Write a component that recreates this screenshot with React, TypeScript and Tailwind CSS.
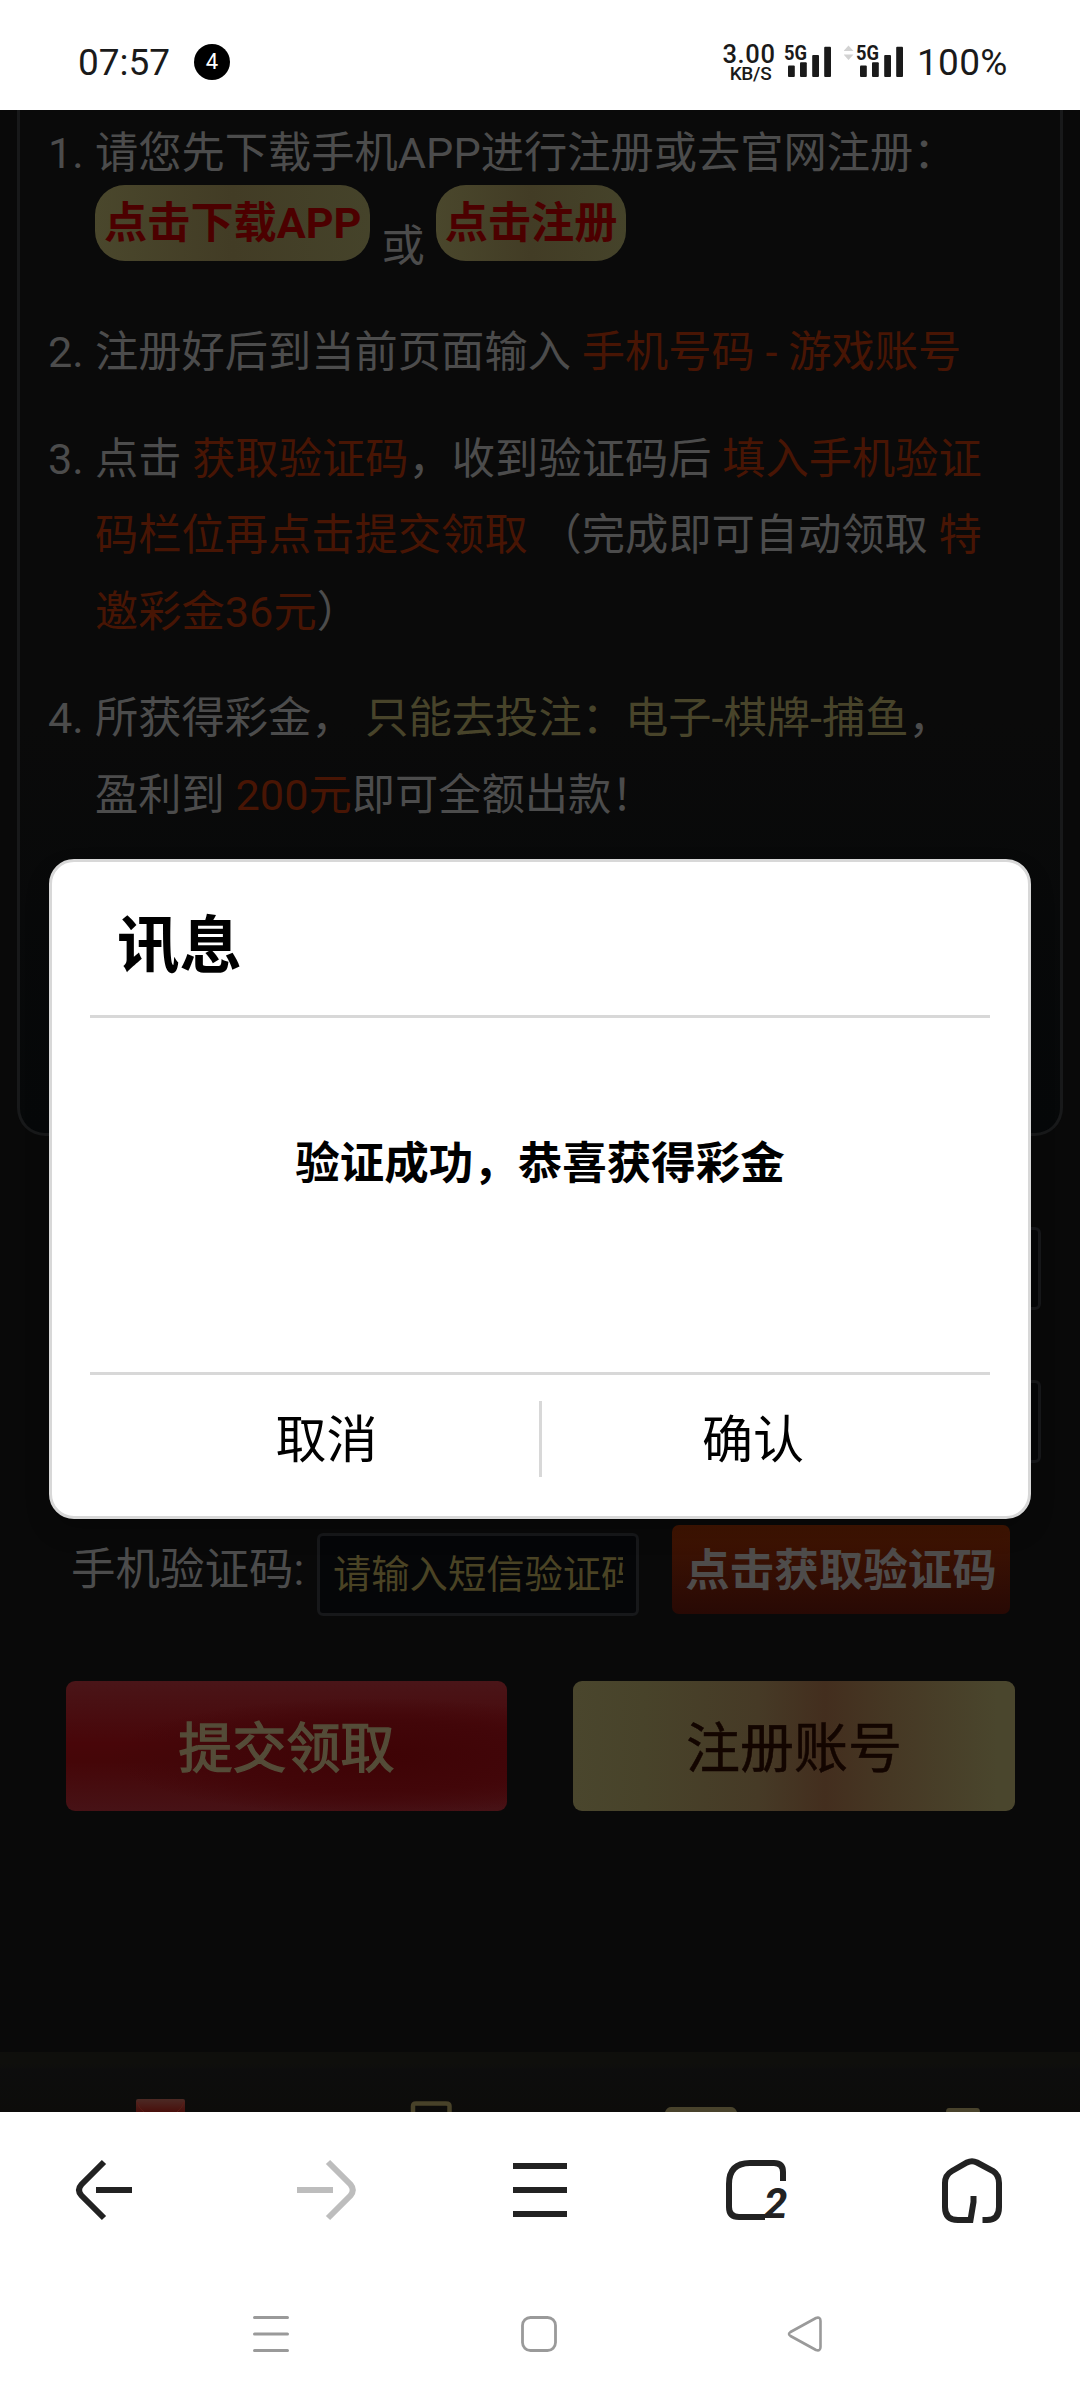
import type { ReactNode } from 'react';

function Signal({ arrows }: { arrows?: boolean }) {
  return (
    <svg width="60" height="40" viewBox="0 0 60 40" className="block">
      {arrows && <path d="M-0.500 11 L4.500 5.500 L9.500 11 Z M-0.500 14.500 L9.500 14.500 L4.500 20 Z" fill="#d2d2d2" />}
      <text x="12" y="20.200" fontSize="21" fontWeight="700" fontFamily="Roboto" textLength="23" lengthAdjust="spacingAndGlyphs" fill="#1a1a1a">
        5G
      </text>
      <g fill="#1a1a1a">
        <rect x="16" y="25.500" width="6.800" height="11.500" rx="1" />
        <rect x="28" y="22.300" width="6.800" height="14.700" rx="1" />
        <rect x="40.200" y="15" width="6.800" height="22" rx="1" />
        <rect x="52.200" y="6.800" width="6.800" height="30.200" rx="1" />
      </g>
    </svg>
  );
}

function StatusBar() {
  return (
    <header className="flex h-[110px] shrink-0 items-center bg-white pt-[15px] pl-[78px] text-[#1a1a1a]">
      <span className="w-[92px] pt-px text-[37px] leading-[44px]">07:57</span>
      <span className="ml-[24px] flex size-[36px] -translate-y-[1px] items-center justify-center rounded-full bg-black text-[22px] text-white">4</span>
      <div className="ml-[492px] flex w-[54px] shrink-0 flex-col items-center">
        <span className="text-[25.500px] leading-[23px] font-medium tracking-[0.6px]">3.00</span>
        <span className="pl-[3px] text-[19px] leading-[16px] font-medium tracking-[-0.3px]">KB/S</span>
      </div>
      <div className="-ml-[4px] flex shrink-0 gap-[12px] pb-[15px]">
        <div className="h-[40px] pt-[5px]"><Signal /></div>
        <div className="h-[40px] pt-[5px]"><Signal arrows /></div>
      </div>
      <span className="ml-[13px] pt-px text-[37px] leading-[44px] tracking-[0.3px]">100%</span>
    </header>
  );
}

function Hot({ children }: { children: ReactNode }) {
  return <span className="text-[#481504]">{children}</span>;
}

function Item({ n, children }: { n: number; children: ReactNode }) {
  return (
    <li className="mb-[30px] flex">
      <span className="w-[47px] shrink-0">{n}.</span>
      <div className="whitespace-nowrap">{children}</div>
    </li>
  );
}

function Pill({ children }: { children: ReactNode }) {
  return (
    <button className="h-[76px] rounded-[30px] bg-linear-to-r from-[#4a472c] via-[#423c25] to-[#45432a] px-[9px] text-[43.200px] leading-[76px] font-bold text-[#4c0000]">
      <span className="block translate-y-[1px]">{children}</span>
    </button>
  );
}

function Rules() {
  return (
    <section className="mx-[17px] -mt-[3px] h-[1029px] rounded-b-[28px] border-[3px] border-t-0 border-[#18191a] bg-linear-to-b from-[#0a0a0a] from-60% to-[#060809]">
      <ol className="pt-[9px] pl-[28px] text-[43.280px] leading-[76.500px] text-[#4c4c4c]">
        <Item n={1}>
          <div className="h-[69px]">请您先下载手机APP进行注册或去官网注册：</div>
          <div className="flex h-[100px] items-start">
            <Pill>点击下载APP</Pill>
            <span className="mt-[24px] px-[11px]">或</span>
            <Pill>点击注册</Pill>
          </div>
        </Item>
        <Item n={2}>
          注册好后到当前页面输入 <Hot>手机号码 - 游戏账号</Hot>
        </Item>
        <Item n={3}>
          点击 <Hot>获取验证码</Hot>，收到验证码后 <Hot>填入手机验证<br />码栏位再点击提交领取</Hot> （完成即可自动领取 <Hot>特<br />邀彩金36元</Hot>）
        </Item>
        <Item n={4}>
          所获得彩金， <span className="text-[#48442a]">只能去投注：电子-棋牌-捕鱼</span>，<br />
          盈利到 <Hot>200元</Hot>即可全额出款！
        </Item>
      </ol>
    </section>
  );
}

function FormArea() {
  return (
    <div>
      <div className="mt-[91px] mr-[39px] ml-[317px] h-[83px] rounded-[6px] border-[3px] border-[#17181b] bg-[#050608]" />
      <div className="mt-[70px] mr-[39px] ml-[317px] h-[83px] rounded-[6px] border-[3px] border-[#17181b] bg-[#050608]" />
      <div className="mt-[62px] flex h-[89px] items-start pl-[71px]">
        <label className="w-[246px] pt-[2px] text-[44.500px] leading-[87px] whitespace-nowrap text-[#4c4c4c]">手机验证码:</label>
        <div className="mt-[8px] flex h-[83px] w-[322px] items-center rounded-[6px] border-[3px] border-[#17181a] bg-[#050608] px-[13px]">
          <span className="block w-full overflow-hidden text-[38.300px] leading-[77px] whitespace-nowrap text-[#4a4324]">请输入短信验证码</span>
        </div>
        <button className="ml-[33px] h-[89px] w-[338px] rounded-[7px] bg-linear-to-b from-[#421502] to-[#280904] pt-[3px] text-[44.500px] leading-[87px] font-bold whitespace-nowrap text-[#4e4c4b]">
          点击获取验证码
        </button>
      </div>
      <div className="mt-[67px] flex gap-[66px] pl-[66px]">
        <button className="h-[130px] w-[441px] rounded-[9px] bg-[radial-gradient(ellipse_60%_45%_at_70%_58%,#3e0305_0%,#420609_60%,transparent_100%),linear-gradient(180deg,#4a1518_0%,#480609_48%,#450608_62%,#471216_100%)] pt-[6px] text-[54px] text-[#544c38] [-webkit-text-stroke:1.4px_#544c38]">
          提交领取
        </button>
        <button className="h-[130px] w-[442px] rounded-[9px] bg-[linear-gradient(90deg,#4a462d_0%,#48432a_16%,#463a26_42%,#432e1e_57%,#463824_72%,#4a462d_96%)] pt-[6px] text-[54px] text-[#130500] [-webkit-text-stroke:0.5px_#130500]">
          注册账号
        </button>
      </div>
    </div>
  );
}

function SiteFooter() {
  return (
    <div className="mt-[241px] h-[60px] bg-linear-to-b from-[#0f0f0c] from-20% via-[#0d0d0d] via-30% to-[#0d0c0a]">
      <svg width="1080" height="60" viewBox="0 0 1080 60" className="block">
        <defs>
          <linearGradient id="envelope" x1="0" y1="0" x2="0" y2="1">
            <stop offset="0" stopColor="#4c2a25" />
            <stop offset="1" stopColor="#490f0b" />
          </linearGradient>
        </defs>
        <path d="M136 60 V49 Q136 47 138 47 H183 Q185 47 185 49 V60 Z" fill="url(#envelope)" />
        <path d="M137 50 Q139 57 144 60 M184 50 Q182 57 177 60" fill="none" stroke="#5a1d17" strokeWidth="1" />
        <path d="M413 60 V54 Q413 51.500 416 51.500 H446 Q449.500 51.500 449.500 54 V60" fill="none" stroke="#484229" strokeWidth="4.500" />
        <path d="M665 60 Q667 55 671 55 H731 Q735 55 737 60 Z" fill="#49432c" />
        <path d="M946 60 Q946 56 949 56 H977 Q980 56 980 60 Z" fill="#49432c" />
      </svg>
    </div>
  );
}

function Dialog() {
  return (
    <div className="absolute top-[749px] left-[49px] flex h-[660px] w-[982px] flex-col rounded-[25px] border-[3px] border-[#d8d8d8] bg-white px-[38px] text-black shadow-[0_12px_24px_rgba(0,0,0,0.2)]">
      <h1 className="h-[153px] pl-[27px] text-[62.500px] leading-[169px] font-bold">讯息</h1>
      <div className="h-[3px] shrink-0 bg-[#d8d8d8]" />
      <p className="h-[354px] pt-[117px] text-center text-[44.500px] leading-[58px] font-bold">验证成功，恭喜获得彩金</p>
      <div className="h-[3px] shrink-0 bg-[#d8d8d8]" />
      <div className="flex pt-[26px] text-[51px] leading-[76px]">
        <button className="w-[449px] translate-y-[2px] pl-[24px]">取消</button>
        <span className="h-[76px] w-[3px] bg-[#d8d8d8]" />
        <button className="w-[448px] translate-y-[2px] pr-[26px]">确认</button>
      </div>
    </div>
  );
}

function BrowserNav() {
  return (
    <nav className="flex h-[156px] items-center bg-white pl-[72px] text-[#222]">
      <svg width="64" height="70" viewBox="0 0 64 70" fill="none" stroke="currentColor" strokeWidth="6">
        <path d="M32 7 L9.500 29.500 Q4.500 35 9.500 40.500 L32 63 M24 35 H60" />
      </svg>
      <svg width="64" height="70" viewBox="0 0 64 70" fill="none" stroke="#bdbdbd" strokeWidth="6" className="ml-[159px]">
        <path d="M33 7 L55.500 29.500 Q60 35 55.500 40.500 L33 63 M2 35 H38" />
      </svg>
      <svg width="54" height="70" viewBox="0 0 54 70" fill="none" stroke="currentColor" strokeWidth="6" className="ml-[154px]">
        <path d="M0 11 H54 M0 35 H54 M0 59 H54" />
      </svg>
      <svg width="70" height="70" viewBox="0 0 70 70" fill="none" stroke="currentColor" strokeWidth="6" className="ml-[155px]">
        <path d="M61 26 V17 Q61 8 52 8 H28 Q7 8 7 29 V52 Q7 62 17 62 H43" />
        <text x="42" y="62.500" fontSize="42" fontWeight="700" fontStyle="italic" fontFamily="Roboto" fill="currentColor" stroke="none">
          2
        </text>
      </svg>
      <svg width="70" height="70" viewBox="0 0 70 70" fill="none" stroke="currentColor" strokeWidth="6" className="ml-[146px]">
        <path d="M44.500 65 H49 Q61 65 61 52 V28 Q61 20 55 16 L39 7.500 Q34 5 29 7.500 L14 16 Q7 20 7 28 V52 Q7 65 20 65 H32.500 L35.500 47 V41" />
      </svg>
    </nav>
  );
}

function SystemNav() {
  return (
    <div className="flex flex-1 items-start bg-white pt-[46px] pl-[253px] text-[#9a9a9a]">
      <svg width="36" height="40" viewBox="0 0 36 40" stroke="currentColor" strokeWidth="3" strokeLinecap="round">
        <path d="M1.500 3.500 H34.500 M1.500 20 H34.500 M1.500 36.500 H34.500" />
      </svg>
      <svg width="38" height="40" viewBox="0 0 38 40" fill="none" stroke="currentColor" strokeWidth="2.800" className="ml-[231px]">
        <rect x="2.500" y="3.500" width="33" height="33" rx="8" />
      </svg>
      <svg width="38" height="40" viewBox="0 0 38 40" fill="none" stroke="currentColor" strokeWidth="2.600" strokeLinejoin="round" className="ml-[228px]">
        <path d="M4.500 18 Q1.500 20 4.500 22 L30 36 Q34.500 37.500 34.500 33 V7 Q34.500 2.500 30 4 Z" />
      </svg>
    </div>
  );
}

export default function App() {
  return (
    <div className="flex h-[2400px] w-[1080px] flex-col overflow-hidden bg-white font-['Roboto','Noto_Sans_CJK_SC',sans-serif]" lang="zh-CN">
      <StatusBar />
      <main className="relative h-[2002px] shrink-0 overflow-hidden bg-[#090909]">
        <Rules />
        <FormArea />
        <SiteFooter />
        <Dialog />
      </main>
      <BrowserNav />
      <SystemNav />
    </div>
  );
}
